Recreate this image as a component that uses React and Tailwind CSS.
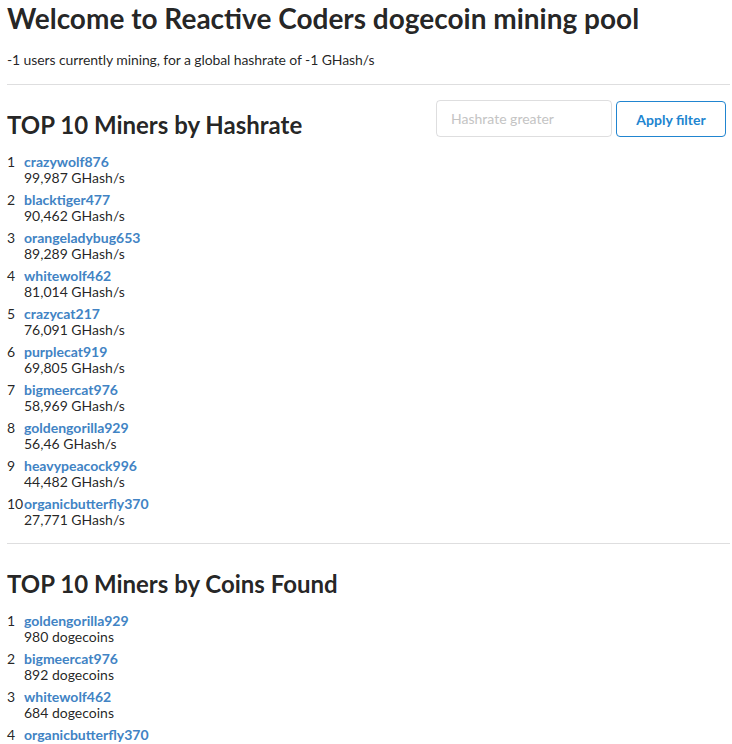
import { useState } from 'react';

const byHashrate = [
  { name: 'crazywolf876', value: '99,987 GHash/s' },
  { name: 'blacktiger477', value: '90,462 GHash/s' },
  { name: 'orangeladybug653', value: '89,289 GHash/s' },
  { name: 'whitewolf462', value: '81,014 GHash/s' },
  { name: 'crazycat217', value: '76,091 GHash/s' },
  { name: 'purplecat919', value: '69,805 GHash/s' },
  { name: 'bigmeercat976', value: '58,969 GHash/s' },
  { name: 'goldengorilla929', value: '56,46 GHash/s' },
  { name: 'heavypeacock996', value: '44,482 GHash/s' },
  { name: 'organicbutterfly370', value: '27,771 GHash/s' },
];

const byCoins = [
  { name: 'goldengorilla929', value: '980 dogecoins' },
  { name: 'bigmeercat976', value: '892 dogecoins' },
  { name: 'whitewolf462', value: '684 dogecoins' },
  { name: 'organicbutterfly370', value: '512 dogecoins' },
];

function MinerList({ miners, className = '' }) {
  return (
    <div className={`flex flex-col gap-[6px] ${className}`}>
      {miners.map((m, i) => (
        <div key={m.name} className="flex leading-[16px]">
          <div className="w-[17px] flex-shrink-0">{i + 1}</div>
          <div>
            <a href="#" className="block font-bold text-[#4183c4]">
              {m.name}
            </a>
            <div>{m.value}</div>
          </div>
        </div>
      ))}
    </div>
  );
}

export default function App() {
  const [filter, setFilter] = useState('');

  return (
    <div className="min-h-screen bg-white pl-[7px] pr-[2px] font-['Lato','Liberation_Sans',sans-serif] text-[14px] text-[rgba(0,0,0,0.87)]">
      <h1 className="text-[28px] font-bold leading-[36px]">Welcome to Reactive Coders dogecoin mining pool</h1>
      <p className="mt-[14px] leading-[20px] tracking-[-0.1px]">-1 users currently mining, for a global hashrate of -1 GHash/s</p>
      <hr className="mt-[14px] border-t border-[rgba(34,36,38,0.15)]" />

      {/* hashrate section with filter */}
      <div className="mt-[15px] flex items-start justify-between">
        <h2 className="mt-[9px] text-[24px] font-bold leading-[31px]">TOP 10 Miners by Hashrate</h2>
        <div className="flex items-start gap-[4px] pr-[4px]">
          <input
            value={filter}
            onChange={(e) => setFilter(e.target.value)}
            placeholder="Hashrate greater"
            className="h-[37px] w-[176px] rounded-[4px] border border-[rgba(34,36,38,0.15)] px-[14px] text-[14px] outline-none placeholder:text-[#c4c4c4]"
          />
          <button className="mt-[1px] h-[36px] w-[110px] rounded-[4px] border border-[#2185d0] text-[14px] font-bold text-[#2185d0]">
            Apply filter
          </button>
        </div>
      </div>
      <MinerList miners={byHashrate} className="mt-[14px]" />

      <hr className="mt-[15px] border-t border-[rgba(34,36,38,0.15)]" />

      <h2 className="mt-[24px] text-[24px] font-bold leading-[31px]">TOP 10 Miners by Coins Found</h2>
      <MinerList miners={byCoins} className="mt-[14px]" />
    </div>
  );
}
